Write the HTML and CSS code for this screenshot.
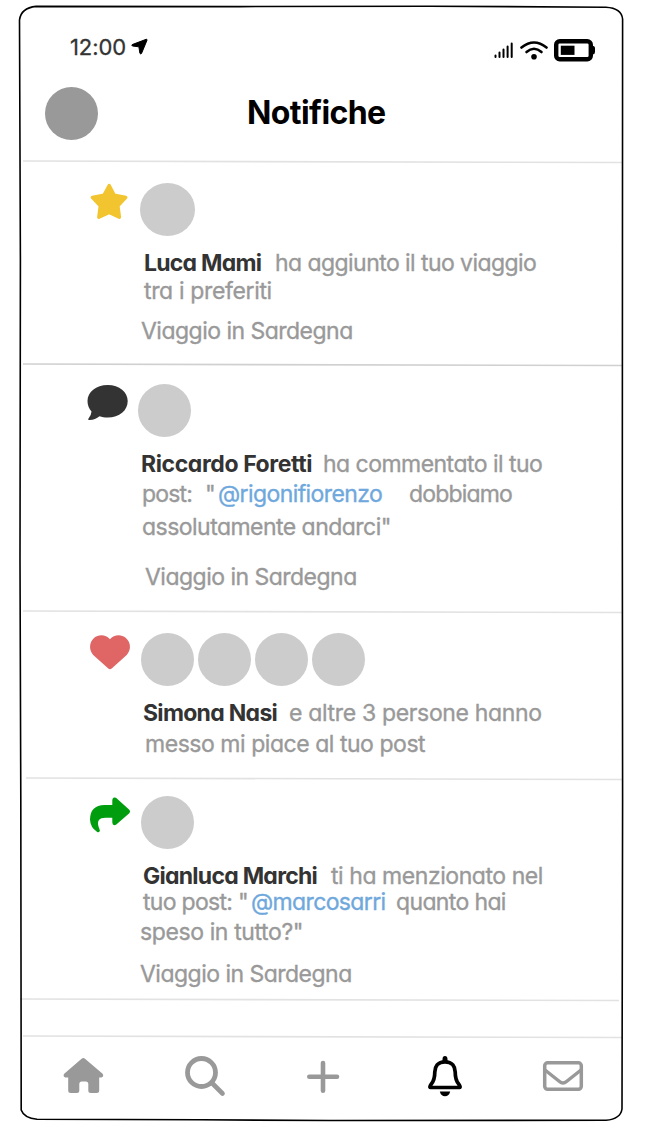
FILE: index.html
```
<!DOCTYPE html>
<html lang="it">
<head>
<meta charset="utf-8">
<title>Notifiche</title>
<link rel="stylesheet" href="styles.css">
</head>
<body>
<main class="phone">
  <svg class="frame" viewBox="0 0 645 1138"><path d="M36 6.4 L240 6.6 L430 6.2 L606 7.2 Q621.5 8 622.6 19 L622.3 500 L622.6 800 L622 1109 Q620.500 1119 606 1120.300 L330 1120.500 L200 1119.800 L37 1119.300 Q24 1118 21.200 1110 L20.800 800 L20 560 L20.400 260 L19.500 20 Q21 8 36 6.400 Z"/></svg>

  <header>
    <div class="status">
      <span class="time">12:00</span>
      <svg class="arrow" viewBox="0 0 17 17"><path d="M15.200 1.300 L1.200 6.600 Q.5 7.500 1.400 8 L7.900 8.800 L8.900 15.300 Q9.600 16.400 10.500 15.500 L16 2.200 Q16.200 1 15.200 1.300 Z" fill="#000" stroke="#000"/></svg>
      <svg class="signals" viewBox="0 0 104 26">
        <g stroke="#000" stroke-width="2" stroke-linecap="round"><path d="M3.500 17.500V19M7.500 14.500V19M11.500 11.500V19M15.600 8.500V19M19.700 5.500V19"/></g>
        <g fill="none" stroke="#000" stroke-width="2.600" stroke-linecap="round"><path d="M29.500 9.500 Q42 -.5 54.500 9.500"/><path d="M34.500 14 Q42 7.500 49.500 14"/></g>
        <circle cx="42" cy="18.800" r="2.800"/>
        <rect x="64.200" y="3.200" width="34.600" height="18" rx="3.500" fill="#fff" stroke="#000" stroke-width="4.400"/>
        <rect x="68.800" y="7.700" width="13.700" height="9.200"/>
        <path d="M100 8H101.500Q103 8.500 103 10V14Q103 16 101 16.500H100Z"/>
      </svg>
    </div>
    <div class="bar"><i class="me"></i><h1>Notifiche</h1></div>
  </header>

  <section class="item star">
    <svg class="rule" viewBox="0 0 602 4"><path d="M3 1L602 2.500"/></svg>
    <div class="people">
      <svg class="badge" viewBox="0 0 42 40"><path d="M21.200 2.600 L26.300 12.200 L37.800 14.400 L29.900 22.800 L31.400 34.300 L21.200 29.400 L10.800 34.300 L12.300 22.800 L4.300 14.400 L15.900 12.200 Z" fill="#f2c530" stroke="#f2c530" stroke-width="3.400" stroke-linejoin="round"/></svg>
      <i class="face wide"></i>
    </div>
    <p class="l1"><b>Luca Mami</b><span>ha aggiunto il tuo viaggio</span></p>
    <p class="l2">tra i preferiti</p>
    <p class="trip">Viaggio in Sardegna</p>
  </section>

  <section class="item comment">
    <svg class="rule dark" viewBox="0 0 602 4"><path d="M3 1L602 2.500"/></svg>
    <div class="people">
      <svg class="badge" viewBox="0 0 42 40"><path d="M20.700 2 C32.500 2 40.700 9 40.700 18 C40.700 27.500 32.500 34.500 20.700 34.500 C17.500 34.500 15 33.900 12.500 33.200 C9.500 35.800 6 37.200 2 37 Q.3 36.700 1.500 35.400 Q4.200 32.700 4.500 28.500 C2 25.500 .5 22 .5 18 C.5 9 9 2 20.700 2Z" fill="#333"/></svg>
      <i class="face"></i>
    </div>
    <p class="l1"><b>Riccardo Foretti</b><span>ha commentato il tuo</span></p>
    <p class="l2"><span>post:</span><span class="quote">"</span><a>@rigonifiorenzo</a><span class="rest">dobbiamo</span></p>
    <p class="l3">assolutamente andarci"</p>
    <p class="trip">Viaggio in Sardegna</p>
  </section>

  <section class="item like">
    <svg class="rule" viewBox="0 0 602 4"><path d="M3 1L602 2.500"/></svg>
    <div class="people">
      <svg class="badge" viewBox="0 0 42 40"><path d="M20 6.200 C16.200 1.700 8.800 .7 4 5 C-1 9.500 -1.200 17 3.200 22 L18.300 35.600 Q20 37 21.700 35.600 L36.700 22 C41.200 17 41.100 9.500 35.900 5 C31 .7 23.700 1.700 20 6.200Z" fill="#e06666"/></svg>
      <i class="face"></i><i class="face"></i><i class="face"></i><i class="face"></i>
    </div>
    <p class="l1"><b>Simona Nasi</b><span>e altre 3 persone hanno</span></p>
    <p class="l2">messo mi piace al tuo post</p>
  </section>

  <section class="item mention">
    <svg class="rule" viewBox="0 0 602 4"><path d="M6 1L602 2.500"/></svg>
    <div class="people">
      <svg class="badge" viewBox="0 0 42 40"><path d="M22.300 9 V4.500 Q22.500 .3 26 1.800 L39.300 13.800 Q41 15.500 39.300 17.200 L26 28.700 Q22.500 30.200 22.300 26.500 V21.800 H15.500 Q6 22 8.500 30.500 L9.900 34.500 Q9.600 37 7.200 36 Q.2 31.300 0 23.500 Q.2 9.200 14.500 9 Z" fill="#009e0f"/></svg>
      <i class="face"></i>
    </div>
    <p class="l1"><b>Gianluca Marchi</b><span>ti ha menzionato nel</span></p>
    <p class="l2"><span class="lead">tuo post: "</span><a>@marcosarri</a><span class="rest">quanto hai</span></p>
    <p class="l3">speso in tutto?"</p>
    <p class="trip">Viaggio in Sardegna</p>
  </section>

  <div class="gap"><svg class="rule" viewBox="0 0 602 4"><path d="M0 1L599 2.500"/></svg></div>

  <nav>
    <svg class="rule" viewBox="0 0 602 4"><path d="M3 1L602 2.500"/></svg>
    <div class="tabs">
      <svg viewBox="0 0 42 42"><path d="M19.600 2.800 Q21.300 1.400 23 2.800 L40.600 17.800 Q42.300 20.500 39.400 21.600 H37.200 V34.500 Q37.200 37 34.600 37 H28.800 Q26.300 37 26.300 34.500 V28 Q26.300 25.500 23.800 25.500 H19.800 Q17.300 25.500 17.300 28 V34.500 Q17.300 37 14.800 37 H8.800 Q6.200 37 6.200 34.500 V21.600 H3.400 Q.5 20.500 2.200 17.800 Z" fill="#999"/></svg>
      <svg class="search" viewBox="0 0 42 42"><g fill="none" stroke="#999" stroke-linecap="round"><circle cx="17.500" cy="16.500" r="14" stroke-width="4.800"/><path d="M28.500 27.500L38.500 37.500" stroke-width="4.600"/></g></svg>
      <svg viewBox="0 0 42 42"><path d="M21 7V34.800M7.300 20.800H35" stroke="#999" stroke-width="4.600" stroke-linecap="round"/></svg>
      <svg class="bell" viewBox="0 0 42 42"><path d="M21 5.800 C13.500 5.800 10.800 11 10.800 16 Q10.800 24 7.300 28 Q5 31.500 6.500 31.500 H35.500 Q37 31.500 34.700 28 Q31.200 24 31.200 16 C31.200 11 28.500 5.800 21 5.800Z" fill="none" stroke="#000" stroke-width="3.700"/><path d="M18.500 6V3Q18.600 0 21 0Q23.400 0 23.500 3V6ZM15.800 35.500H26.200Q25 40.300 21 40.300Q17 40.300 15.800 35.500Z"/></svg>
      <svg viewBox="0 0 42 42"><g fill="none" stroke="#999" stroke-width="3.500" stroke-linejoin="round"><rect x="2.700" y="6.800" width="36.600" height="26.500" rx="3"/><path d="M3 14L17.500 25.500Q21 28.500 24.500 25.500L39 14"/></g></svg>
    </div>
  </nav>
</main>
</body>
</html>
```
FILE: styles.css
```
* { box-sizing: border-box; }
body { margin: 0; background: #fff; font-family: Inter, "Liberation Sans", sans-serif; font-feature-settings: "cv11"; }
.phone { position: relative; width: 645px; height: 1138px; overflow: hidden; }
.frame { position: absolute; left: 0; top: 0; width: 645px; height: 1138px; fill: none; stroke: #000; stroke-width: 1.6; pointer-events: none; }
svg { display: block; flex: none; }

header { height: 160px; padding-top: 35px; }
.status { display: flex; height: 26px; padding-left: 70px; }
.time { width: 61px; font-size: 22px; line-height: 25px; letter-spacing: -.1px; color: #333; -webkit-text-stroke: .3px; }
.arrow { width: 17px; height: 17px; margin-top: 3px; }
.signals { width: 104px; height: 26px; margin: 3px 0 0 344px; }
.bar { display: flex; height: 54px; margin: 25px 0 0 45px; }
.me { width: 53px; height: 53px; margin-top: 1px; border-radius: 50%; background: #999; }
h1 { margin: 7px 0 0 149px; font-size: 32px; line-height: 40px; letter-spacing: -.6px; font-weight: 650; color: #000; }

.rule { width: 602px; height: 4px; margin-left: 20px; fill: none; stroke: #e2e2e2; stroke-width: 1.6; }
.rule.dark { stroke: #d0d0d0; }

.people { display: flex; height: 54px; }
.badge { width: 42px; height: 40px; }
.face { width: 53px; height: 53px; border-radius: 50%; background: #ccc; }
.face.wide { width: 55px; height: 53px; }

.item p { display: flex; margin: 0; padding-left: 1px; font-size: 23px; line-height: 24px; height: 24px; letter-spacing: -.52px; color: #999; white-space: pre; -webkit-text-stroke: .35px; }
.item b { color: #333; font-weight: 700; -webkit-text-stroke: 0; }
.item a { color: #6fa8dc; }

.star { height: 203px; }
.star .people { margin: 19px 0 0 88px; }
.star .face { margin-left: 10px; }
.star .l1 { margin: 14px 0 0 143px; letter-spacing: -.56px; }
.star b { width: 131px; letter-spacing: -.75px; }
.star .l2 { margin: 4px 0 0 143px; letter-spacing: -.35px; }
.star .trip { margin: 16px 0 0 140px; }

.comment { height: 247px; }
.comment .people { margin: 16px 0 0 87px; }
.comment .face { margin: 1px 0 0 9px; }
.comment .l1 { margin: 15px 0 0 140px; letter-spacing: -.53px; }
.comment b { width: 182px; letter-spacing: -.4px; }
.comment .l2 { margin: 6px 0 0 141px; letter-spacing: -.6px; }
.comment .l2 span:first-child { width: 63px; letter-spacing: -.83px; }
.comment .quote { width: 13px; }
.comment a { width: 191px; }
.comment .rest { letter-spacing: -.83px; }
.comment .l3 { margin: 9px 0 0 141px; letter-spacing: -.53px; }
.comment .trip { margin: 26px 0 0 144px; }

.like { height: 167px; }
.like .people { margin: 19px 0 0 90px; }
.like .face { margin-left: 4px; }
.like .badge + .face { margin-left: 9px; }
.like .l1 { margin: 14px 0 0 142px; letter-spacing: -.33px; }
.like b { width: 146px; letter-spacing: -.7px; }
.like .l2 { margin: 7px 0 0 144px; letter-spacing: -.46px; }

.mention { height: 221px; }
.mention .people { margin: 15px 0 0 90px; }
.mention .face { margin-left: 9px; }
.mention .l1 { margin: 14px 0 0 142px; letter-spacing: -.44px; }
.mention b { width: 188px; letter-spacing: -.74px; }
.mention .l2 { margin: 2px 0 0 142px; letter-spacing: -.64px; }
.mention .lead { width: 108px; letter-spacing: -.7px; }
.mention a { width: 145px; }
.mention .l3 { margin: 6px 0 0 139px; letter-spacing: -.39px; }
.mention .trip { margin: 18px 0 0 139px; }

.gap { height: 37px; }
.tabs { display: grid; grid-template-columns: 121px 119px 122px 118px 42px; margin: 17px 0 0 62px; }
.tabs svg { width: 42px; height: 42px; }
.tabs .search { margin-left: 1px; }
.tabs .bell { margin-left: 0; }
```
